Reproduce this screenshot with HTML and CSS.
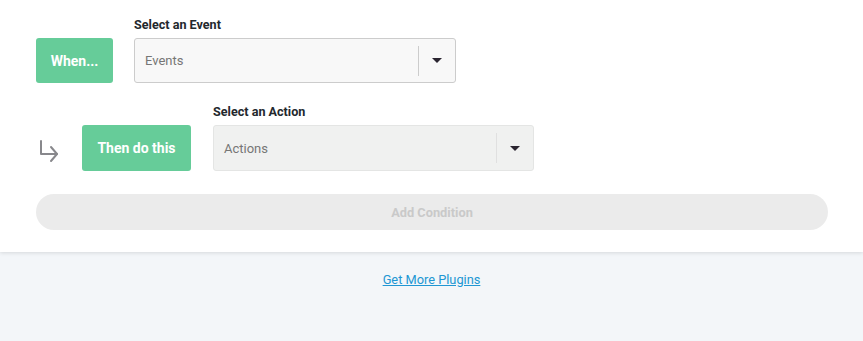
FILE: index.html
```html
<!DOCTYPE html>
<html lang="en">
<head>
    <meta charset="UTF-8">
    <title>Automation</title>
    <link rel="stylesheet" href="styles.css">
</head>
<body>
    <div class="card">
        <div class="rule-row">
            <div class="step-btn step-when">When...</div>
            <div class="field">
                <label class="field-label">Select an Event</label>
                <div class="select select-event">
                    <span class="select-value">Events</span>
                    <span class="select-toggle"><span class="caret"></span></span>
                </div>
            </div>
        </div>

        <div class="rule-row rule-row-then">
            <div class="then-icon">
                <svg width="22" height="24" viewBox="0 0 22 24" fill="none" stroke="#88888c" stroke-width="2" stroke-linecap="round" stroke-linejoin="round">
                    <path d="M2 1v13h16"></path>
                    <path d="M12 7l6 7-6 7"></path>
                </svg>
            </div>
            <div class="step-btn step-then">Then do this</div>
            <div class="field">
                <label class="field-label">Select an Action</label>
                <div class="select select-action">
                    <span class="select-value">Actions</span>
                    <span class="select-toggle"><span class="caret"></span></span>
                </div>
            </div>
        </div>

        <button class="add-condition">Add Condition</button>
    </div>

    <div class="footer">
        <a href="#" class="more-link">Get More Plugins</a>
    </div>
</body>
</html>
```

FILE: styles.css
```css
* {
    box-sizing: border-box;
    margin: 0;
    padding: 0;
}

body {
    font-family: Roboto, 'Liberation Sans', sans-serif;
    background: #f3f6f9;
    color: #23282d;
    min-height: 100vh;
}

.card {
    background: #ffffff;
    padding: 17px 35px 22px 36px;
    box-shadow: 0 1px 4px rgba(0, 0, 0, 0.12);
}

.rule-row {
    display: flex;
    align-items: flex-end;
    gap: 21px;
}

.rule-row-then {
    margin-top: 21px;
    gap: 0;
}

.step-btn {
    height: 45px;
    display: flex;
    align-items: center;
    justify-content: center;
    background: #66cc99;
    color: #ffffff;
    font-weight: 700;
    font-size: 14px;
    border-radius: 3px;
}

.step-when {
    width: 77px;
}

.step-then {
    width: 109px;
    height: 46px;
    margin-right: 22px;
}

.then-icon {
    width: 46px;
    height: 46px;
    padding-left: 3px;
    padding-top: 15px;
    overflow: hidden;
}

.then-icon svg {
    display: block;
}

.field-label {
    display: block;
    font-size: 12.6px;
    font-weight: 700;
    line-height: 16px;
    margin-bottom: 5px;
}

.select {
    display: flex;
    align-items: center;
    height: 45px;
    border: 1px solid #cccccc;
    border-radius: 3px;
    background: #f8f8f8;
}

.select-event {
    width: 322px;
}

.select-action {
    width: 321px;
    height: 46px;
    background: #f0f1f0;
    border-color: #e4e5e4;
}

.select-value {
    flex: 1;
    padding-left: 10px;
    font-size: 13px;
    color: #767676;
}

.select-toggle {
    width: 37px;
    height: 30px;
    border-left: 1px solid #cccccc;
    display: flex;
    align-items: center;
    justify-content: center;
}

.select-action .select-toggle {
    border-left-color: #e0e0e0;
}

.caret {
    width: 0;
    height: 0;
    border-left: 5px solid transparent;
    border-right: 5px solid transparent;
    border-top: 5px solid #2a2530;
}

.add-condition {
    display: block;
    width: 100%;
    height: 36px;
    margin-top: 23px;
    border: none;
    border-radius: 18px;
    background: #ebebeb;
    color: #c9c9c9;
    font-family: inherit;
    font-size: 12.8px;
    font-weight: 700;
}

.footer {
    text-align: center;
    padding-top: 17px;
}

.more-link {
    font-size: 12.8px;
    color: #2196d3;
}
```
